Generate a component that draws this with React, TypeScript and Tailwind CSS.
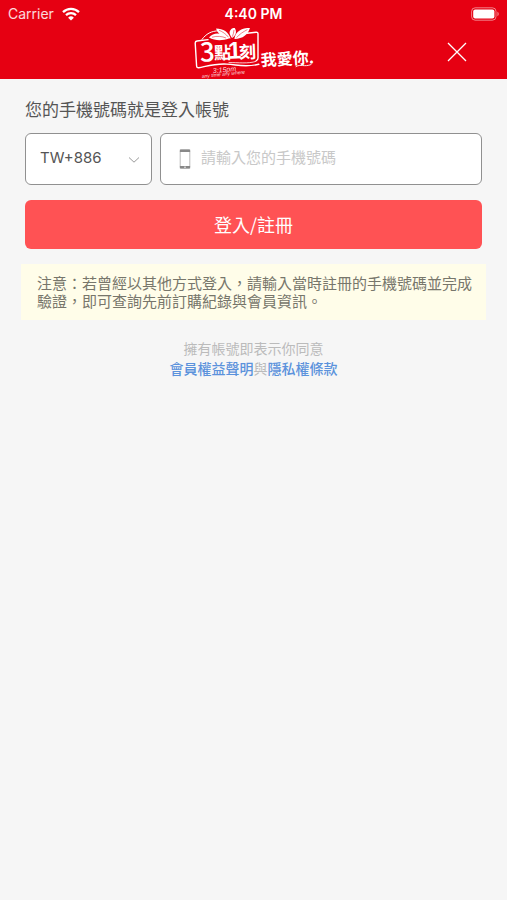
import type { FormEvent } from "react";

function StatusBar() {
  return (
    <div className="grid h-7 grid-cols-3 items-center px-2 font-['Inter','Liberation_Sans',sans-serif] text-sm text-white">
      <div className="flex items-center gap-2 text-white/85">
        <span>Carrier</span>
        <svg viewBox="0 0 18 14" className="h-3.5 w-[18px]" aria-hidden="true">
          <g fill="none" stroke="white" strokeWidth="2.3">
            <path d="M1 5.1a11.6 11.6 0 0 1 16 0" />
            <path d="M4 8.2a7.3 7.3 0 0 1 10 0" />
          </g>
          <path d="M9 13.6 6.1 10.7a4.1 4.1 0 0 1 5.8 0z" fill="white" />
        </svg>
      </div>
      <span className="text-center font-semibold">4:40 PM</span>
      <svg
        viewBox="0 0 28 14"
        className="h-3.5 w-7 justify-self-end"
        aria-hidden="true"
      >
        <rect
          x="0.6"
          y="0.8"
          width="24.4"
          height="12.4"
          rx="3.6"
          fill="none"
          stroke="white"
          strokeOpacity="0.5"
        />
        <rect x="2.2" y="2.4" width="21.2" height="9.2" rx="2" fill="white" />
        <path d="M26.4 4.8c1.8.7 1.8 3.7 0 4.4z" fill="white" fillOpacity="0.5" />
      </svg>
    </div>
  );
}

function Logo() {
  return (
    <svg
      viewBox="0 2 124 51"
      className="h-[51px] w-[124px]"
      role="img"
      aria-label="3點1刻 我愛你"
    >
      {/* frame around the name, open where the leaves sit */}
      <g fill="none" stroke="white" strokeLinecap="round" strokeLinejoin="round">
        <path
          d="M16 13.6 5 15q-1.8.3-1.8 2L4.6 40q.2 2 2.2 1.7c9-1.8 16-4.2 28-3.6 11 .6 18 3.6 32 .2"
          strokeWidth="1.4"
        />
        <path d="M55 7.2 64 6.2q2-.2 2 1.8V32q0 2-1.8 2.6" strokeWidth="1.4" />
        <path d="M64 35.4c-8 2.6-18 1-27 1.2" strokeWidth="0.8" />
        <path d="M10 13.4C14 8 19 4.8 27 4.8" strokeWidth="1" />
        <path d="M104 40.6c5-3 8 .8 15-2" strokeWidth="0.9" />
      </g>
      {/* tea leaves */}
      <g fill="white">
        <path d="M17 11.6c5-6 12.6-5.4 20 1-7 2.2-14 2.2-20-1z" />
        <path d="M24 2.4c7.4 0 12.4 3.6 14.6 10C31.2 11.8 26.2 8.6 24 2.4z" />
        <path d="M40 12c-4-4.6-3-9.2 2.6-10.4 2.6 4.4 1.4 8.2-2.6 10.4z" />
        <path d="M42.4 13C43 6.8 48 2 58 1.8 56.2 8.4 51 12.8 42.4 13z" />
      </g>
      <g stroke="#e60012" strokeWidth="0.5" fill="none">
        <path d="M20 11.2c5-1.4 10-1 14 .8" />
        <path d="M27 4.2c3.6 1.6 7 3.8 9.4 7" />
        <path d="M42 4c-.2 2.4-.8 4.6-1.6 6.6" />
        <path d="M55.4 3.6c-4 2-8.2 4.800-10.800 8" />
      </g>
      <g
        fill="white"
        transform="rotate(-2 32 26)"
        className="font-['Noto_Sans_CJK_TC',sans-serif]"
      >
        <text x="8" y="35" fontSize="26" fontWeight="500">3</text>
        <text x="22" y="33" fontSize="17" fontWeight="700">點</text>
        <text
          x="36"
          y="33"
          fontSize="24"
          className="font-['Liberation_Sans',sans-serif] font-bold"
        >
          1
        </text>
        <text x="47" y="33" fontSize="17" fontWeight="700">刻</text>
      </g>
      <text
        x="69"
        y="40"
        fontSize="16"
        fill="white"
        transform="rotate(-3 69 40)"
        className="font-['Noto_Sans_CJK_TC',sans-serif] font-bold"
      >
        我愛你.
      </text>
      <g
        fill="white"
        fillOpacity="0.85"
        className="font-['Liberation_Sans',sans-serif] italic"
      >
        <text x="21" y="47" fontSize="7" transform="rotate(-5 21 47)">
          3:15pm
        </text>
        <text x="10" y="52" fontSize="5" transform="rotate(-6 10 52)">
          any time any where
        </text>
      </g>
    </svg>
  );
}

function PhoneIcon() {
  return (
    <svg viewBox="0 0 12 20" className="h-5 w-3 shrink-0" aria-hidden="true">
      <rect
        x="1.2"
        y="0.9"
        width="9.6"
        height="18.2"
        rx="1"
        fill="none"
        stroke="#aaa"
        strokeWidth="0.8"
      />
      <path d="M.9.6h10.2v2.4H.9zM.9 17h10.2v2.4H.9z" fill="#888" />
      <path d="M5 18.2h2" stroke="white" strokeWidth="0.8" />
    </svg>
  );
}

export default function App() {
  const handleSubmit = (e: FormEvent<HTMLFormElement>) => {
    e.preventDefault();
  };

  return (
    <div
      lang="zh-Hant"
      className="min-h-screen bg-[#f6f6f6] font-['Noto_Sans_CJK_TC','Noto_Sans',sans-serif] text-[#555]"
    >
      <header className="bg-[#e60012]">
        <StatusBar />
        <div className="grid grid-cols-[1fr_auto_1fr] items-center">
          <span />
          <Logo />
          <button
            type="button"
            aria-label="關閉"
            className="mr-9 mb-1 justify-self-end p-1"
          >
            <svg
              viewBox="0 0 20 20"
              className="size-5"
              fill="none"
              stroke="white"
              strokeWidth="1.3"
            >
              <path d="m1 1 18 18M19 1 1 19" />
            </svg>
          </button>
        </div>
      </header>

      <main className="px-[25px] pt-[18px]">
        <form onSubmit={handleSubmit}>
          <label htmlFor="phone" className="block text-[17px] leading-6">
            您的手機號碼就是登入帳號
          </label>

          <div className="mt-3 flex gap-2">
            <div className="relative w-[127px] shrink-0">
              <select
                aria-label="國碼"
                className="h-[52px] w-full appearance-none rounded-md border border-[#909090] bg-white pb-0.5 pl-3.5 font-['Inter','Liberation_Sans',sans-serif] text-[15px]"
              >
                <option>TW+886</option>
              </select>
              <svg
                viewBox="0 0 12 6"
                className="pointer-events-none absolute top-6 right-3 h-1.5 w-3"
                fill="none"
                stroke="#999"
              >
                <path d="m1 .5 5 4.7L11 .5" />
              </svg>
            </div>
            <div className="flex h-[52px] min-w-0 flex-1 items-center gap-2.5 rounded-md border border-[#909090] bg-white px-[18px]">
              <PhoneIcon />
              <input
                id="phone"
                type="tel"
                placeholder="請輸入您的手機號碼"
                className="min-w-0 flex-1 pb-1 text-[15px] outline-none placeholder:text-[#c8c8c8]"
              />
            </div>
          </div>

          <button
            type="submit"
            className="mt-[15px] h-[49px] w-full rounded-md bg-[#ff5254] pb-0.5 text-lg text-white"
          >
            登入/註冊
          </button>
        </form>

        <p className="-mx-1 mt-[15px] bg-[#fffde9] py-2.5 pr-3 pl-4 text-[15px] leading-[18px] text-[#77766b]">
          注意：若曾經以其他方式登入，請輸入當時註冊的手機號碼並完成驗證，即可查詢先前訂購紀錄與會員資訊。
        </p>

        <p className="mt-[18px] text-center text-sm text-[#bbb]">
          擁有帳號即表示你同意
          <br />
          <a href="#" className="font-medium text-[#5b92dc]">
            會員權益聲明
          </a>
          與
          <a href="#" className="font-medium text-[#5b92dc]">
            隱私權條款
          </a>
        </p>
      </main>
    </div>
  );
}
